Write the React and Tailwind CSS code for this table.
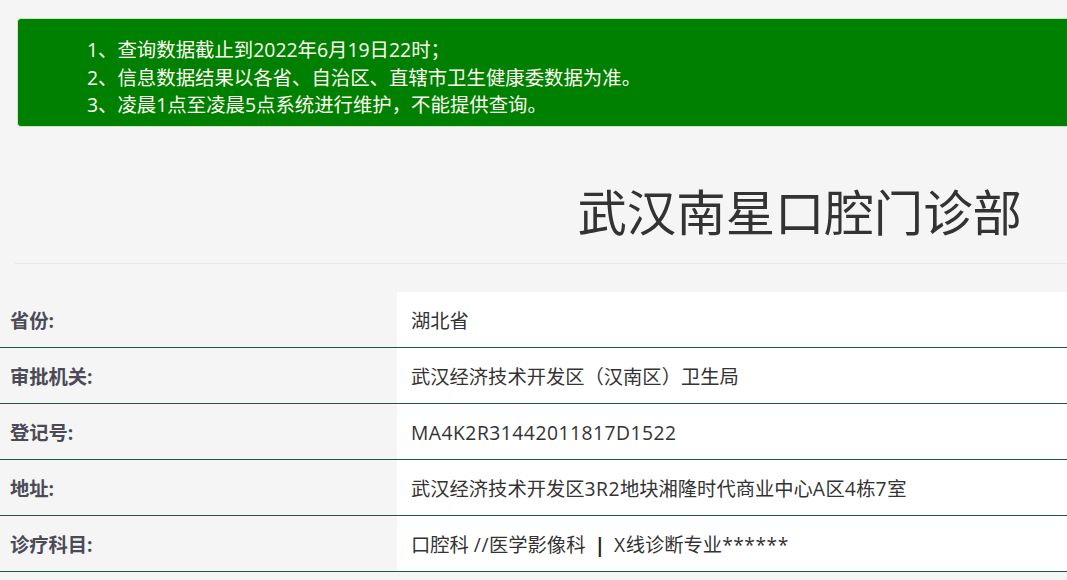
import React from "react";

const notices = [
  "1、查询数据截止到2022年6月19日22时；",
  "2、信息数据结果以各省、自治区、直辖市卫生健康委数据为准。",
  "3、凌晨1点至凌晨5点系统进行维护，不能提供查询。",
];

const rows = [
  { label: "省份:", value: "湖北省" },
  { label: "审批机关:", value: "武汉经济技术开发区（汉南区）卫生局" },
  { label: "登记号:", value: "MA4K2R31442011817D1522" },
  { label: "地址:", value: "武汉经济技术开发区3R2地块湘隆时代商业中心A区4栋7室" },
  { label: "诊疗科目:", value: "口腔科 //医学影像科 | X线诊断专业******" },
];

// latin runs get a bit of tracking so they sit as wide as the original font
function Value({ text }) {
  const parts = text.split(/([A-Za-z0-9*\/]+|\|)/);
  return (
    <span>
      {parts.map((p, i) => {
        if (p === "|") return <span key={i} className="mx-[4px] font-bold text-[#222]">|</span>;
        if (/^[A-Za-z0-9*\/]+$/.test(p)) return <span key={i} className="tracking-[0.5px]">{p}</span>;
        return <span key={i}>{p}</span>;
      })}
    </span>
  );
}

export default function App() {
  return (
    <div
      className="min-h-[580px] w-full overflow-hidden bg-[#f5f5f5] pt-[18px]"
      style={{ fontFamily: '"Open Sans", "Noto Sans CJK SC", sans-serif' }}
    >
      <div className="ml-[17px] h-[109px] rounded-l-[4px] border border-r-0 border-[#cfe3c0] bg-[#008000] pl-[69px] pt-[17px] text-[19.4px] leading-[27.5px] text-[#fffef2]">
        {notices.map((n) => (
          <div key={n}>{n}</div>
        ))}
      </div>

      <div className="ml-[15px] flex h-[137px] items-start justify-end border-b border-[#e6e6e6] pr-[45px] pt-[60px]">
        <h1 className="text-[49.4px] font-normal leading-none text-[#333]">武汉南星口腔门诊部</h1>
      </div>

      <div className="mt-[28px]">
        {rows.map((r) => (
          <div key={r.label} className="flex h-[56px] border-b border-[#1d5a42]">
            <div className="flex w-[397px] items-center pl-[10px] pt-[3px] text-[19.3px] font-bold text-[#4b4b58]">{r.label}</div>
            <div className="flex flex-1 items-center bg-white pl-[14px] pt-[3px] text-[19.3px] text-[#333]">
              <Value text={r.value} />
            </div>
          </div>
        ))}
      </div>
    </div>
  );
}
